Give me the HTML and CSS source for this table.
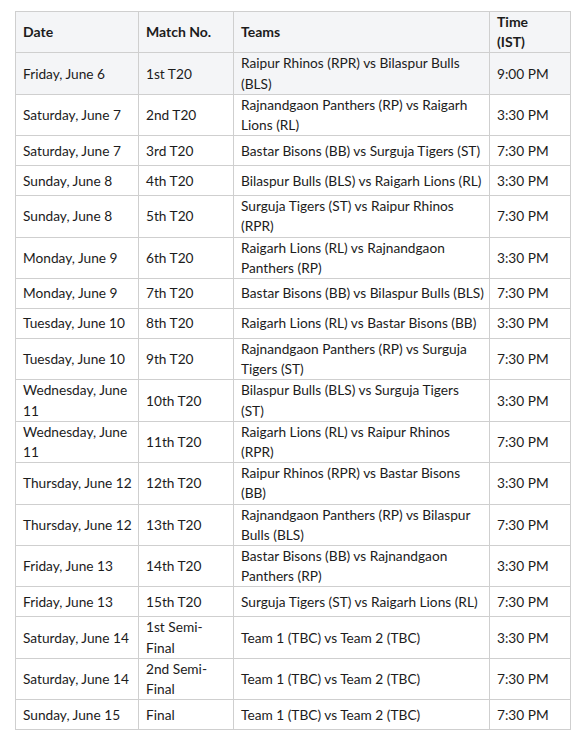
FILE: index.html
```html
<!DOCTYPE html>
<html lang="en">
<head>
<meta charset="utf-8">
<title>Schedule</title>
<link rel="stylesheet" href="styles.css">
</head>
<body>
<table class="schedule">
  <colgroup>
    <col class="c-date">
    <col class="c-match">
    <col class="c-teams">
    <col class="c-time">
  </colgroup>
  <thead>
    <tr class="shade"><th>Date</th><th>Match No.</th><th>Teams</th><th class="time head-time">Time (IST)</th></tr>
  </thead>
  <tbody>
    <tr class="shade"><td>Friday, June 6</td><td>1st T20</td><td>Raipur Rhinos (RPR) vs Bilaspur Bulls (BLS)</td><td class="time">9:00 PM</td></tr>
    <tr><td>Saturday, June 7</td><td>2nd T20</td><td>Rajnandgaon Panthers (RP) vs Raigarh Lions (RL)</td><td class="time">3:30 PM</td></tr>
    <tr><td>Saturday, June 7</td><td>3rd T20</td><td>Bastar Bisons (BB) vs Surguja Tigers (ST)</td><td class="time">7:30 PM</td></tr>
    <tr><td>Sunday, June 8</td><td>4th T20</td><td>Bilaspur Bulls (BLS) vs Raigarh Lions (RL)</td><td class="time">3:30 PM</td></tr>
    <tr><td>Sunday, June 8</td><td>5th T20</td><td>Surguja Tigers (ST) vs Raipur Rhinos (RPR)</td><td class="time">7:30 PM</td></tr>
    <tr><td>Monday, June 9</td><td>6th T20</td><td>Raigarh Lions (RL) vs Rajnandgaon Panthers (RP)</td><td class="time">3:30 PM</td></tr>
    <tr><td>Monday, June 9</td><td>7th T20</td><td>Bastar Bisons (BB) vs Bilaspur Bulls (BLS)</td><td class="time">7:30 PM</td></tr>
    <tr><td>Tuesday, June 10</td><td>8th T20</td><td>Raigarh Lions (RL) vs Bastar Bisons (BB)</td><td class="time">3:30 PM</td></tr>
    <tr><td>Tuesday, June 10</td><td>9th T20</td><td>Rajnandgaon Panthers (RP) vs Surguja Tigers (ST)</td><td class="time">7:30 PM</td></tr>
    <tr><td>Wednesday, June 11</td><td>10th T20</td><td class="snug">Bilaspur Bulls (BLS) vs Surguja Tigers (ST)</td><td class="time">3:30 PM</td></tr>
    <tr><td>Wednesday, June 11</td><td>11th T20</td><td>Raigarh Lions (RL) vs Raipur Rhinos (RPR)</td><td class="time">7:30 PM</td></tr>
    <tr><td>Thursday, June 12</td><td>12th T20</td><td>Raipur Rhinos (RPR) vs Bastar Bisons (BB)</td><td class="time">3:30 PM</td></tr>
    <tr><td>Thursday, June 12</td><td>13th T20</td><td>Rajnandgaon Panthers (RP) vs Bilaspur Bulls (BLS)</td><td class="time">7:30 PM</td></tr>
    <tr><td>Friday, June 13</td><td>14th T20</td><td>Bastar Bisons (BB) vs Rajnandgaon Panthers (RP)</td><td class="time">3:30 PM</td></tr>
    <tr><td>Friday, June 13</td><td>15th T20</td><td>Surguja Tigers (ST) vs Raigarh Lions (RL)</td><td class="time">7:30 PM</td></tr>
    <tr><td>Saturday, June 14</td><td>1st Semi-Final</td><td>Team 1 (TBC) vs Team 2 (TBC)</td><td class="time">3:30 PM</td></tr>
    <tr><td>Saturday, June 14</td><td>2nd Semi-Final</td><td>Team 1 (TBC) vs Team 2 (TBC)</td><td class="time">7:30 PM</td></tr>
    <tr><td>Sunday, June 15</td><td>Final</td><td>Team 1 (TBC) vs Team 2 (TBC)</td><td class="time">7:30 PM</td></tr>
  </tbody>
</table>
</body>
</html>
```
FILE: styles.css
```css
html, body {
  margin: 0;
  padding: 0;
  background: #ffffff;
}
body {
  font-family: Lato, "Liberation Sans", sans-serif;
  font-size: 13.7px;
  color: #1c1c1c;
}
.schedule {
  margin: 11px 0 0 15px;
  width: 555px;
  table-layout: fixed;
  border-collapse: collapse;
  border: 1px solid #cfcfcf;
}
.c-date { width: 123px; }
.c-match { width: 95px; }
.c-teams { width: 256px; }
.c-time { width: 81px; }
.schedule th,
.schedule td {
  border: 1px solid #cfcfcf;
  padding: 0 3px 0 7px;
  line-height: 20.2px;
  height: 29px;
  text-align: left;
  vertical-align: middle;
}
.schedule th {
  font-weight: 700;
  font-size: 14px;
}
.schedule .time {
  padding-right: 10px;
}
.schedule .head-time {
  padding-right: 20px;
}
.schedule .snug {
  padding-right: 8px;
}
.shade {
  background: #f4f5f7;
}
```
